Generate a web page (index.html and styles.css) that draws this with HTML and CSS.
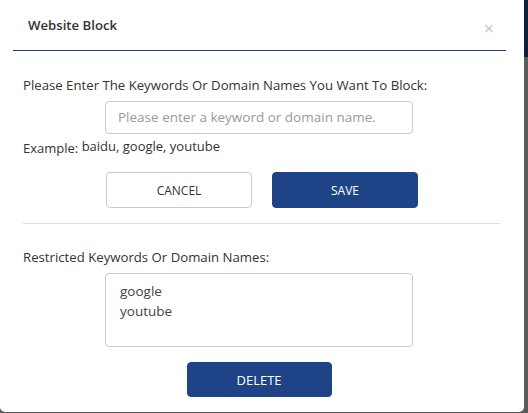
FILE: index.html
```html
<!DOCTYPE html>
<html>
<head>
<meta charset="utf-8">
<link rel="stylesheet" href="styles.css">
</head>
<body>
<div class="modal">
  <div class="header">
    <span class="title">Website Block</span>
    <span class="close">&times;</span>
  </div>
  <div class="body">
    <div class="label">Please Enter The Keywords Or Domain Names You Want To Block:</div>
    <div class="center">
      <div class="input">Please enter a keyword or domain name.</div>
    </div>
    <div class="example">Example: <span class="ex-values">baidu, google, youtube</span></div>
    <div class="buttons">
      <button class="btn btn-cancel">CANCEL</button>
      <button class="btn btn-primary">SAVE</button>
    </div>
    <div class="divider"></div>
    <div class="label label-2">Restricted Keywords Or Domain Names:</div>
    <div class="center">
      <div class="list">
        <div>google</div>
        <div>youtube</div>
      </div>
    </div>
    <div class="center">
      <button class="btn btn-primary btn-delete">DELETE</button>
    </div>
  </div>
</div>
</body>
</html>
```
FILE: styles.css
```css
html, body {
  margin: 0;
  padding: 0;
}
body {
  width: 528px;
  height: 413px;
  background: linear-gradient(to bottom, #0f1f3d 0, #0f1f3d 57px, #5a5a5a 57px, #5a5a5a 100%);
  font-family: "Open Sans", "Noto Sans", sans-serif;
  color: #333;
  overflow: hidden;
}
.modal {
  width: 524px;
  height: 412px;
  background: #fff;
  border-radius: 0 0 5px 5px;
  box-sizing: border-box;
}
.header {
  margin: 0 18px 0 13px;
  height: 50px;
  border-bottom: 1px solid #1e3f7c;
  display: flex;
  align-items: center;
  justify-content: space-between;
  padding: 0 12px 0 15px;
  box-sizing: content-box;
}
.title {
  font-size: 13.2px;
  font-weight: 600;
  color: #333;
  margin-top: -1px;
}
.close {
  font-size: 18px;
  color: #c8c8c8;
  line-height: 1;
  margin-top: 5px;
}
.body {
  padding: 0 24px 0 23px;
}
.label {
  font-size: 13.2px;
  margin-top: 25px;
  line-height: 18px;
  color: #333;
}
.center {
  display: flex;
  justify-content: center;
  padding-right: 5px;
}
.input {
  margin-top: 7px;
  width: 308px;
  height: 33px;
  box-sizing: border-box;
  border: 1px solid #ccc;
  border-radius: 4px;
  padding-left: 12px;
  font-size: 13.5px;
  color: #9a9a9a;
  line-height: 31px;
}
.example {
  font-size: 13px;
  margin-top: 4px;
  line-height: 20px;
}
.ex-values {
  position: relative;
  top: -2px;
}
.buttons {
  display: flex;
  justify-content: center;
  gap: 20px;
  margin-top: 14px;
  padding-left: 1px;
}
.btn {
  width: 146px;
  height: 36px;
  font-family: "Open Sans", "Noto Sans", sans-serif;
  font-size: 12px;
  border-radius: 4px;
  cursor: pointer;
}
.btn-cancel {
  background: #fff;
  border: 1px solid #ccc;
  color: #333;
}
.btn-primary {
  background: #1e4387;
  border: 1px solid #1e4387;
  color: #fff;
}
.divider {
  margin-top: 15px;
  height: 1px;
  background: #ddd;
}
.label-2 {
  margin-top: 24px;
}
.list {
  margin-top: 7px;
  width: 308px;
  height: 74px;
  box-sizing: border-box;
  border: 1px solid #ccc;
  border-radius: 4px;
  padding: 7px 14px;
  font-size: 13.5px;
  line-height: 20px;
  color: #444;
}
.btn-delete {
  margin-top: 15px;
  width: 145px;
  height: 35px;
  font-size: 13px;
}
```
